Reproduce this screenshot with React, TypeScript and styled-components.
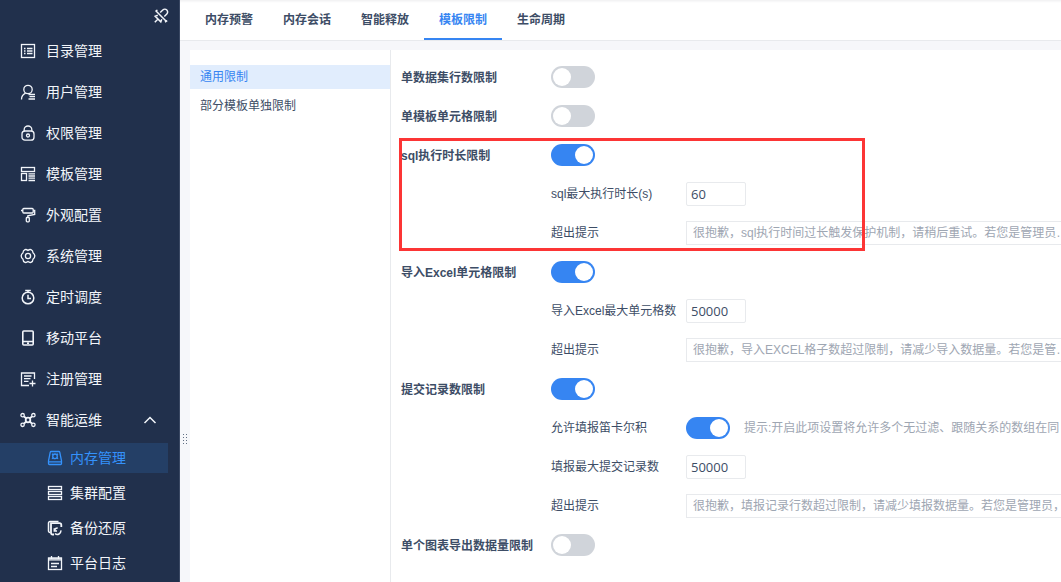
import React from "react";
import styled, { createGlobalStyle } from "styled-components";

const GlobalStyle = createGlobalStyle`
  * { box-sizing: border-box; }
  body {
    margin: 0;
    font-family: "Liberation Sans", "Noto Sans CJK SC", sans-serif;
    font-size: 12px;
    line-height: 24px;
    color: #3d4d66;
  }
  button, input { font: inherit; color: inherit; margin: 0; }
`;

const Page = styled.div`
  display: flex;
  height: 100vh;
  overflow: hidden;
  background: #f6f7fa;
`;

const Sidebar = styled.nav`
  flex: none;
  width: 180px;
  background: #21304c;
  border-right: 1px solid #3a4863;
  color: #f2f5fa;
  font-size: 14px;
  overflow: hidden;
`;

const SidebarTop = styled.div`
  display: flex;
  justify-content: flex-end;
  height: 30px;
  padding: 8px 10px 0 0;
`;

const PinButton = styled.button`
  display: flex;
  width: 16px;
  height: 16px;
  padding: 0;
  border: 0;
  background: none;
`;

const MenuList = styled.ul`
  list-style: none;
  margin: 0;
  padding: 0;
`;

const MenuLink = styled.a`
  display: flex;
  align-items: center;
  gap: 10px;
  height: 41px;
  padding: 0 22px 0 20px;
  color: inherit;
  text-decoration: none;
`;

const MenuText = styled.span`
  flex: 1;
  white-space: nowrap;
`;

const SubMenu = styled(MenuList)`
  display: flex;
  flex-direction: column;
  gap: 5px;
  padding-top: 3px;
`;

const SubLink = styled.a<{ $active?: boolean }>`
  display: flex;
  align-items: center;
  gap: 7px;
  height: 30px;
  margin-right: 11px;
  padding-left: 47px;
  color: ${(p) => (p.$active ? "#3492fc" : "inherit")};
  background: ${(p) => (p.$active ? "#243f66" : "transparent")};
  text-decoration: none;
`;

const Svg = styled.svg`
  flex: none;
  display: block;
  fill: none;
  stroke: currentColor;
`;

const Splitter = styled.div`
  flex: none;
  display: flex;
  align-items: flex-end;
  justify-content: center;
  width: 10px;
  padding-bottom: 135px;
`;

const Content = styled.div`
  flex: 1;
  min-width: 0;
  display: flex;
  flex-direction: column;
`;

const TabBar = styled.header`
  flex: none;
  display: flex;
  height: 41px;
  padding-left: 10px;
  background: #fff;
  border-bottom: 1px solid #e8eaed;
  box-shadow: inset 0 3px 3px -2px #ececee;
`;

const Tab = styled.button<{ $active?: boolean }>`
  padding: 2px 15px 0;
  border: 0;
  border-bottom: 2px solid ${(p) => (p.$active ? "#3685f2" : "transparent")};
  background: none;
  font-weight: 700;
  white-space: nowrap;
  color: ${(p) => (p.$active ? "#3685f2" : "inherit")};
`;

const Body = styled.div`
  flex: 1;
  min-height: 0;
  display: flex;
`;

const Panel = styled.div`
  flex: 1;
  min-width: 0;
  display: flex;
  margin-top: 9px;
  background: #fff;
`;

const ScopeList = styled.div`
  flex: none;
  display: flex;
  flex-direction: column;
  gap: 5px;
  width: 201px;
  padding-top: 15px;
  border-right: 1px solid #e8eaed;
`;

const Scope = styled.button<{ $active?: boolean }>`
  height: 24px;
  padding: 0 10px;
  border: 0;
  text-align: left;
  color: ${(p) => (p.$active ? "#3685f2" : "inherit")};
  background: ${(p) => (p.$active ? "#e1edfd" : "transparent")};
`;

const Settings = styled.main`
  flex: 1;
  min-width: 0;
  display: flex;
  flex-direction: column;
  gap: 15px;
  padding: 15px 0 15px 10px;
  overflow: hidden;
`;

const Group = styled.section`
  position: relative;
  display: flex;
  flex-direction: column;
  gap: 15px;
`;

const Highlight = styled.div`
  position: absolute;
  top: -5px;
  bottom: -6px;
  left: -2px;
  width: 466px;
  border: 3px solid #fc3535;
  pointer-events: none;
`;

const Row = styled.div<{ $sub?: boolean }>`
  display: grid;
  grid-template-columns: ${(p) => (p.$sub ? "135px" : "150px")} max-content max-content;
  align-items: center;
  height: 24px;
  padding-left: ${(p) => (p.$sub ? "150px" : "0")};
  white-space: nowrap;
`;

const Label = styled.label<{ $bold?: boolean }>`
  padding-top: ${(p) => (p.$bold ? "2px" : "0")};
  line-height: ${(p) => (p.$bold ? "22px" : "24px")};
  font-weight: ${(p) => (p.$bold ? 700 : 400)};
`;

const Switch = styled.input`
  appearance: none;
  display: block;
  width: 44px;
  height: 22px;
  padding: 2px;
  border-radius: 11px;
  background: #d0d4da;

  &::before {
    content: "";
    display: block;
    width: 18px;
    height: 18px;
    border-radius: 50%;
    background: #fff;
  }
  &:checked { background: #3685f2; }
  &:checked::before { margin-left: auto; }
`;

const NumberBox = styled.input`
  width: 60px;
  height: 24px;
  padding: 0 4px;
  border: 1px solid #e8eaed;
  border-radius: 2px;
  background: #fff;
  font-family: "Open Sans", sans-serif;
  font-size: 13px;
`;

const MessageBox = styled.input`
  width: 400px;
  height: 24px;
  padding: 0 6px;
  border: 1px solid #e8eaed;
  background: #fff;
  color: #9ea6b2;
  text-overflow: ellipsis;
`;

const Hint = styled.span`
  padding-left: 14px;
  color: #9ea6b2;
`;

const shapes: Record<string, React.ReactNode> = {
  list: (
    <>
      <rect x="1.5" y="1.5" width="13" height="13" />
      <path d="M4 5.5h1.5M4 8h1.5M4 10.5h1.5M7 5.5h5.5M7 8h5.5M7 10.5h5.5" />
    </>
  ),
  user: (
    <>
      <circle cx="8" cy="5.5" r="4.2" />
      <path d="M5.6 9.2C3 10.3 1.5 12.5 1.5 15.5M8.5 10.5h6.5M9.5 12.7h5.5M8.5 15h6.5" />
    </>
  ),
  lock: (
    <>
      <path d="M4.2 6V4.5a3.8 3.5 0 0 1 7.6 0V6" />
      <rect x="2" y="6" width="12" height="9.2" rx="3" />
      <circle cx="8" cy="10.5" r="1.5" />
    </>
  ),
  template: (
    <>
      <rect x="1.5" y="1.5" width="13" height="4" />
      <rect x="1.5" y="7.5" width="5" height="7" />
      <path d="M8.5 7.8H15M8.5 10H15M8.5 12.2H15M8.5 14.5H15" />
    </>
  ),
  roller: (
    <>
      <rect x="2.8" y="1.5" width="10.4" height="4.5" rx="1" />
      <path d="M2.8 3.5H1M13.2 3.5h1.5v4L7.8 8.8v1.7" />
      <rect x="6.3" y="10.5" width="3" height="4.3" rx="0.8" />
    </>
  ),
  gear: (
    <>
      <path d="M5 1.6Q6.500 1.200 8 2.400Q9.500 1.200 11 1.600Q13 2.500 13 4.800Q14.800 6 14.800 8Q14.800 10 13 11.200Q13 13.500 11 14.400Q9.500 14.800 8 13.600Q6.500 14.800 5 14.400Q3 13.500 3 11.200Q1.200 10 1.200 8Q1.200 6 3 4.800Q3 2.500 5 1.600z" />
      <circle cx="8" cy="8" r="2.6" />
    </>
  ),
  timer: (
    <>
      <circle cx="8" cy="9" r="5.8" strokeWidth="1.5" />
      <path d="M5.2 1.5h5.6M8 1.5v1.7M8 5.8v3.7h3" strokeWidth="1.5" />
    </>
  ),
  phone: (
    <>
      <rect x="2.8" y="1" width="10.4" height="14" rx="1" strokeWidth="1.6" />
      <path d="M2.8 11.5h10.4M7 13.3h2" strokeWidth="1.5" />
    </>
  ),
  register: (
    <path d="M14.5 8V2h-13v12.5H9M4 5h7.5M4 7.7h6.500M4 10.4h4.500M12.500 9.5v6M9.5 12.5h6" />
  ),
  network: (
    <>
      <circle cx="2.6" cy="3.2" r="1.7" />
      <circle cx="13.4" cy="3.2" r="1.7" />
      <circle cx="2.6" cy="12.8" r="1.7" />
      <circle cx="13.4" cy="12.8" r="1.7" />
      <circle cx="8" cy="8" r="2.3" strokeWidth="1.8" />
      <path d="M4 4.500l2.400 2M12 4.500l-2.400 2M4 11.500l2.400-2M12 11.500l-2.400-2" strokeWidth="1.8" />
    </>
  ),
  memory: (
    <>
      <path
        d="M4.200 1.500h7.600a1 1 0 0 1 1 .8l1.700 8.500v2.700a1 1 0 0 1-1 1h-11a1 1 0 0 1-1-1v-2.700l1.700-8.500a1 1 0 0 1 1-.8zM1.500 11.800h13"
        strokeLinejoin="round"
      />
      <circle cx="8" cy="6.300" r="2.300" />
      <path d="M5 3.800l1.200 1M11 3.800l-1.200 1M5 8.800l1.200-1M11 8.800l-1.200-1" />
    </>
  ),
  cluster: (
    <>
      <rect x="1.5" y="1.5" width="13" height="3" />
      <rect x="1.5" y="6.5" width="13" height="3" />
      <rect x="1.5" y="11.5" width="13" height="3" />
    </>
  ),
  backup: (
    <>
      <path d="M3 12.500a1.500 1.500 0 0 1-1.500-1.500V3A1.500 1.500 0 0 1 3 1.500h8.500" strokeWidth="1.5" />
      <path
        d="M7 14.500H5.500A1.500 1.500 0 0 1 4 13V3.200h8.500a1.800 1.800 0 0 1 1.800 1.800v2"
        strokeWidth="1.8"
      />
      <path
        d="M8 13.500a3.500 3.500 0 0 0 5.800-3.200M7.300 8.300v2.700h2.700M7.500 10.800a3.200 3.200 0 0 1 3.200-2.800"
        strokeWidth="1.5"
      />
    </>
  ),
  calendar: (
    <>
      <rect x="1.5" y="3" width="13" height="11.5" />
      <path d="M1 4.200h14" strokeWidth="3" strokeOpacity="0.8" />
      <path d="M4.5 1v3M11.5 1v3M4 8.5h8M4 11.5h6" />
    </>
  ),
  unpin: (
    <path
      d="M7.200 4.500L9.800 2a2.800 2.800 0 0 1 4 4l-2.500 2.600M8.800 11.200l-1 2.600-5.600-5.600 2.600-1M5 11l-3.200 3.200M2.500 2.500l11 11M3.800 1.800v2.500M12 14.200l2.200-1.500"
      strokeWidth="1.5"
    />
  ),
};

const Icon = ({ name }: { name: string }) => (
  <Svg width="16" height="16" viewBox="0 0 16 16" strokeWidth="1.3" aria-hidden="true">
    {shapes[name]}
  </Svg>
);

const menu = [
  ["list", "目录管理"],
  ["user", "用户管理"],
  ["lock", "权限管理"],
  ["template", "模板管理"],
  ["roller", "外观配置"],
  ["gear", "系统管理"],
  ["timer", "定时调度"],
  ["phone", "移动平台"],
  ["register", "注册管理"],
];

const operations = [
  ["memory", "内存管理"],
  ["cluster", "集群配置"],
  ["backup", "备份还原"],
  ["calendar", "平台日志"],
];

const tabs = ["内存预警", "内存会话", "智能释放", "模板限制", "生命周期"];

type FieldProps = { id: string; label: string };

const SwitchRow = ({ id, label, on }: FieldProps & { on?: boolean }) => (
  <Row>
    <Label $bold htmlFor={id}>{label}</Label>
    <Switch id={id} type="checkbox" role="switch" defaultChecked={on} />
  </Row>
);

const NumberRow = ({ id, label, value }: FieldProps & { value: string }) => (
  <Row $sub>
    <Label htmlFor={id}>{label}</Label>
    <NumberBox id={id} type="text" inputMode="numeric" defaultValue={value} />
  </Row>
);

const MessageRow = ({ id, value }: { id: string; value: string }) => (
  <Row $sub>
    <Label htmlFor={id}>超出提示</Label>
    <MessageBox id={id} type="text" defaultValue={value} />
  </Row>
);

export default function App() {
  return (
    <Page>
      <GlobalStyle />
      <Sidebar>
        <SidebarTop>
          <PinButton type="button" aria-label="取消固定">
            <Icon name="unpin" />
          </PinButton>
        </SidebarTop>
        <MenuList>
          {menu.map(([icon, text]) => (
            <li key={text}>
              <MenuLink href="#">
                <Icon name={icon} />
                <MenuText>{text}</MenuText>
              </MenuLink>
            </li>
          ))}
          <li>
            <MenuLink href="#" aria-expanded="true">
              <Icon name="network" />
              <MenuText>智能运维</MenuText>
              <Svg width="14" height="8" viewBox="0 0 14 8" strokeWidth="1.5" aria-hidden="true">
                <path d="M1.5 7L7 1.5 12.5 7" />
              </Svg>
            </MenuLink>
            <SubMenu>
              {operations.map(([icon, text], i) => (
                <li key={text}>
                  <SubLink href="#" $active={i === 0}>
                    <Icon name={icon} />
                    {text}
                  </SubLink>
                </li>
              ))}
            </SubMenu>
          </li>
        </MenuList>
      </Sidebar>
      <Content>
        <TabBar>
          {tabs.map((text) => (
            <Tab key={text} type="button" $active={text === "模板限制"}>
              {text}
            </Tab>
          ))}
        </TabBar>
        <Body>
          <Splitter>
            <Svg width="6" height="14" viewBox="0 0 6 14" strokeWidth="1" aria-hidden="true">
              <path d="M1.5 1v12M4.5 1v12" strokeDasharray="1 2" strokeOpacity="0.8" />
            </Svg>
          </Splitter>
          <Panel>
            <ScopeList>
              <Scope type="button" $active>通用限制</Scope>
              <Scope type="button">部分模板单独限制</Scope>
            </ScopeList>
            <Settings>
              <SwitchRow id="rows" label="单数据集行数限制" />
              <SwitchRow id="cells" label="单模板单元格限制" />
              <Group>
                <SwitchRow id="sql" label="sql执行时长限制" on />
                <NumberRow id="sql-max" label="sql最大执行时长(s)" value="60" />
                <MessageRow
                  id="sql-message"
                  value="很抱歉，sql执行时间过长触发保护机制，请稍后重试。若您是管理员，请调整限制"
                />
                <Highlight />
              </Group>
              <Group>
                <SwitchRow id="excel" label="导入Excel单元格限制" on />
                <NumberRow id="excel-max" label="导入Excel最大单元格数" value="50000" />
                <MessageRow
                  id="excel-message"
                  value="很抱歉，导入EXCEL格子数超过限制，请减少导入数据量。若您是管理员，请调整限制"
                />
              </Group>
              <Group>
                <SwitchRow id="submit" label="提交记录数限制" on />
                <Row $sub>
                  <Label htmlFor="cartesian">允许填报笛卡尔积</Label>
                  <Switch id="cartesian" type="checkbox" role="switch" defaultChecked />
                  <Hint>提示:开启此项设置将允许多个无过滤、跟随关系的数组在同</Hint>
                </Row>
                <NumberRow id="submit-max" label="填报最大提交记录数" value="50000" />
                <MessageRow
                  id="submit-message"
                  value="很抱歉，填报记录行数超过限制，请减少填报数据量。若您是管理员，请调整限制"
                />
              </Group>
              <SwitchRow id="chart" label="单个图表导出数据量限制" />
            </Settings>
          </Panel>
        </Body>
      </Content>
    </Page>
  );
}
